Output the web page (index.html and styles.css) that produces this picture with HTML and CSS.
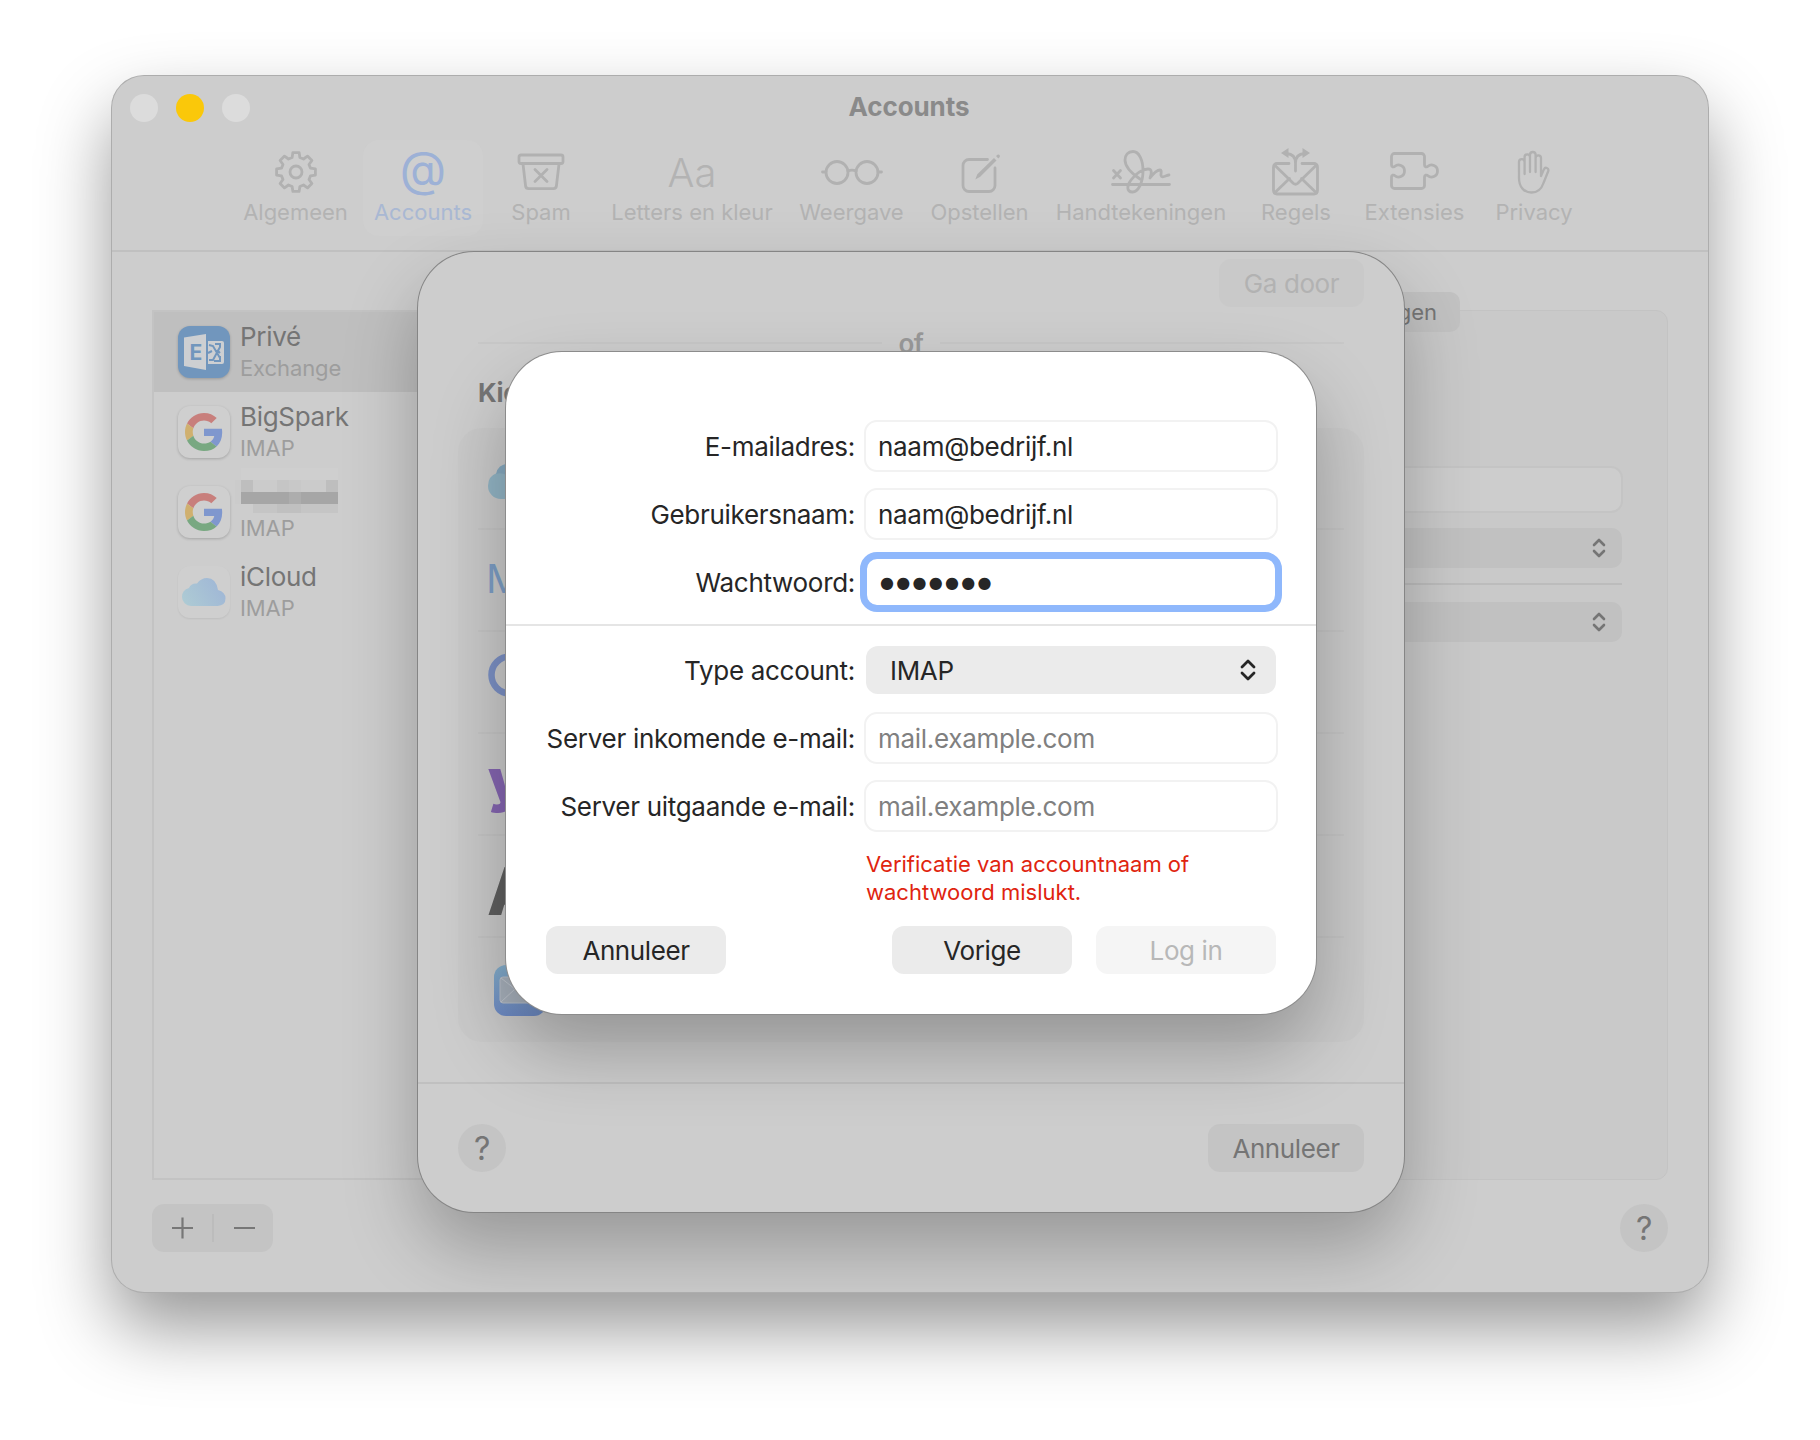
FILE: index.html
```html
<!DOCTYPE html>
<html lang="nl">
<head>
    <meta charset="UTF-8">
    <meta name="viewport" content="width=device-width, initial-scale=1.0">
    <title>Accounts</title>
    <link rel="stylesheet" href="styles.css">
</head>
<body>
    <div class="window">
        <div class="titlebar">
            <div class="lights">
                <span class="light"></span>
                <span class="light yellow"></span>
                <span class="light"></span>
            </div>
            <h1>Accounts</h1>
        </div>

        <!-- Toolbar -->
        <div class="toolbar">
            <div class="tool">
                <div class="tool-icon">
                    <svg width="44" height="44" viewBox="-22 -22 44 44">
                        <path d="M-3.9-14.5L-3.1-19.4H3.1L3.9-14.5L7.5-13L11.5-15.9L15.9-11.5L13-7.5L14.5-3.9L19.4-3.1V3.1L14.5 3.9L13 7.5L15.9 11.5L11.5 15.9L7.5 13L3.9 14.5L3.1 19.4H-3.1L-3.9 14.5L-7.5 13L-11.5 15.9L-15.9 11.5L-13 7.5L-14.5 3.9L-19.4 3.1V-3.1L-14.5-3.9L-13-7.5L-15.9-11.5L-11.5-15.9L-7.5-13Z"/>
                        <circle r="6"/>
                    </svg>
                </div>
                <span>Algemeen</span>
            </div>
            <div class="tool active">
                <div class="tool-icon at">@</div>
                <span>Accounts</span>
            </div>
            <div class="tool">
                <div class="tool-icon">
                    <svg width="48" height="44" viewBox="0 0 48 44">
                        <rect x="2" y="5" width="44" height="8.500" rx="2"/>
                        <path d="M6 14l2.600 22a3 3 0 0 0 3 2.600h24.800a3 3 0 0 0 3-2.600L42 14M18 19.500l12 12M30 19.500l-12 12"/>
                    </svg>
                </div>
                <span>Spam</span>
            </div>
            <div class="tool">
                <div class="tool-icon aa">Aa</div>
                <span>Letters en kleur</span>
            </div>
            <div class="tool">
                <div class="tool-icon">
                    <svg width="62" height="44" viewBox="0 0 62 44">
                        <circle cx="16" cy="22.500" r="11"/>
                        <circle cx="46" cy="22.500" r="11"/>
                        <path d="M1.500 22H5M57 22h3.500M27 21q4-1.800 8 0"/>
                    </svg>
                </div>
                <span>Weergave</span>
            </div>
            <div class="tool">
                <div class="tool-icon">
                    <svg width="44" height="44" viewBox="0 0 44 44">
                        <path d="M29.500 9.500H11a6 6 0 0 0-6 6v20a6 6 0 0 0 6 6h20a6 6 0 0 0 6-6V18"/>
                        <path class="fill" d="M17.300 29.500l2-5.200L36 8l2.500 2.500-16.300 16.300zM38 6l1.500-1.300q1.200-.6 2 .3t.2 2l-1.400 1.500z"/>
                    </svg>
                </div>
                <span>Opstellen</span>
            </div>
            <div class="tool">
                <div class="tool-icon">
                    <svg width="60" height="46" viewBox="0 0 60 46">
                        <path d="M2.500 21.500l7 7.500M9.500 21.500l-7 7.500M1.500 35.500h57"/>
                        <path d="M29 30C20 24 14 18 14 11C14 6 17 2.500 22 2.500C28 2.500 32 11 32 22C32 34 27 43 21.500 43C15 43 16 36 20 31C25 24 32 20 37 20C41 20 41 24 39 29C42 25 46 21 49 21C52 21 48 27.500 51.500 27.800C54 28 56 26 58 26"/>
                    </svg>
                </div>
                <span>Handtekeningen</span>
            </div>
            <div class="tool">
                <div class="tool-icon">
                    <svg width="48" height="48" viewBox="0 0 48 48">
                        <path d="M17 15.500H5a3.500 3.500 0 0 0-3.500 3.500v23.500a3.500 3.500 0 0 0 3.500 3.500h37a3.500 3.500 0 0 0 3.500-3.500V19a3.500 3.500 0 0 0-3.500-3.500H30"/>
                        <path d="M2.500 17l19 18.500q2 1.500 4 0L44.500 17M2.500 45l15-14.500M44.500 45l-15-14.500M23.500 23v-8q0-9-9-9.500M23.500 15q0-9 9-9.500"/>
                        <path class="fill" d="M9 5l7.500-5v10zM38 5l-7.500-5v10z"/>
                    </svg>
                </div>
                <span>Regels</span>
            </div>
            <div class="tool">
                <div class="tool-icon">
                    <svg width="50" height="40" viewBox="0 0 50 40">
                        <path d="M1.500 13V4.500a3 3 0 0 1 3-3H31.500a3 3 0 0 1 3 3V13c0 2 2 2.500 3.500 1.200c3-2.600 9.500-1 9.500 4.800s-6.500 7.400-9.500 4.800c-1.500-1.300-3.500-.8-3.500 1.200V33.500a3 3 0 0 1-3 3H4.500a3 3 0 0 1-3-3V25c0-2 2-2.500 3.500-1.200c3 2.600 9.500 1 9.500-4.800s-6.500-7.400-9.500-4.800c-1.500 1.300-3.500.8-3.500-1.200z"/>
                    </svg>
                </div>
                <span>Extensies</span>
            </div>
            <div class="tool">
                <div class="tool-icon">
                    <svg class="thin" width="36" height="44" viewBox="0 0 36 44">
                        <path d="M8.600 24V12a2.800 2.800 0 0 0-5.600 0V28c0 9 5 14.500 12.500 14.500 6 0 10-3.500 12-9.500l4.800-12c.8-3-3-4.600-4.400-1.600L25 26V8a2.700 2.700 0 0 0-5.400 0V22M19.600 22V4.800a2.800 2.800 0 0 0-5.600 0V22M14 22V7a2.700 2.700 0 0 0-5.400 0V22"/>
                    </svg>
                </div>
                <span>Privacy</span>
            </div>
        </div>

        <!-- Account list and settings -->
        <div class="content">
            <div class="sidebar">
                <div class="account selected">
                    <div class="app-icon exchange">
                        <svg width="52" height="52" viewBox="0 0 52 52">
                            <path fill="#cdcfd2" d="M6 11.500L28 8v36L6 40z"/>
                            <path fill="#cdcfd2" d="M30 15h14a2 2 0 0 1 2 2v19a2 2 0 0 1-2 2H30z"/>
                            <path fill="none" stroke="#7196bd" stroke-width="2" d="M31 19l4 1 7 12M31 34h4l7-13v-3h-5M42 30v5h-6M30 27l4-2M39 24l3 3"/>
                            <text x="11.500" y="33.500" font-size="21" font-weight="700" fill="#7196bd">E</text>
                        </svg>
                    </div>
                    <div>
                        <div class="name">Privé</div>
                        <div class="kind">Exchange</div>
                    </div>
                </div>
                <div class="account">
                    <div class="app-icon">
                        <svg width="38" height="38" viewBox="0 0 48 48">
                            <path fill="#c87f7c" d="M24 9.500c3.540 0 6.710 1.220 9.210 3.600l6.850-6.850C35.900 2.380 30.470 0 24 0 14.620 0 6.510 5.380 2.560 13.220l7.980 6.190C12.430 13.720 17.740 9.500 24 9.500z"/>
                            <path fill="#7f97ce" d="M46.980 24.550c0-1.570-.15-3.090-.38-4.550H24v9.020h12.940c-.58 2.960-2.260 5.480-4.780 7.180l7.730 6c4.510-4.180 7.090-10.360 7.090-17.650z"/>
                            <path fill="#d0b06f" d="M10.530 28.590c-.48-1.450-.76-2.990-.76-4.590s.27-3.140.76-4.590l-7.980-6.190C.92 16.460 0 20.120 0 24c0 3.880.92 7.540 2.560 10.780l7.970-6.190z"/>
                            <path fill="#78a881" d="M24 48c6.480 0 11.930-2.130 15.890-5.810l-7.730-6c-2.150 1.450-4.920 2.300-8.160 2.300-6.260 0-11.570-4.220-13.470-9.910l-7.980 6.190C6.510 42.620 14.620 48 24 48z"/>
                        </svg>
                    </div>
                    <div>
                        <div class="name">BigSpark</div>
                        <div class="kind">IMAP</div>
                    </div>
                </div>
                <div class="account">
                    <div class="app-icon">
                        <svg width="38" height="38" viewBox="0 0 48 48">
                            <path fill="#c87f7c" d="M24 9.500c3.540 0 6.710 1.220 9.210 3.600l6.850-6.850C35.900 2.380 30.470 0 24 0 14.620 0 6.510 5.380 2.560 13.220l7.980 6.190C12.430 13.720 17.740 9.500 24 9.500z"/>
                            <path fill="#7f97ce" d="M46.980 24.550c0-1.570-.15-3.090-.38-4.550H24v9.020h12.940c-.58 2.960-2.260 5.480-4.780 7.180l7.730 6c4.510-4.180 7.090-10.360 7.090-17.650z"/>
                            <path fill="#d0b06f" d="M10.530 28.590c-.48-1.450-.76-2.990-.76-4.590s.27-3.140.76-4.590l-7.980-6.190C.92 16.460 0 20.120 0 24c0 3.880.92 7.540 2.560 10.780l7.970-6.190z"/>
                            <path fill="#78a881" d="M24 48c6.480 0 11.930-2.130 15.890-5.810l-7.730-6c-2.150 1.450-4.920 2.300-8.160 2.300-6.260 0-11.570-4.220-13.470-9.910l-7.980 6.190C6.510 42.620 14.620 48 24 48z"/>
                        </svg>
                    </div>
                    <div>
                        <div class="name masked">
                            <svg width="103" height="45" viewBox="0 0 103 45" shape-rendering="crispEdges">
                                <rect x="6" y="0" width="97" height="12" fill="#cfcfcf"/>
                                <rect x="0" y="12" width="103" height="24" fill="#cbcbcb"/>
                                <rect x="6" y="12" width="12" height="12" fill="#bebebe"/>
                                <rect x="42" y="12" width="12" height="12" fill="#c5c5c5"/>
                                <rect x="54" y="12" width="12" height="12" fill="#c8c8c8"/>
                                <rect x="91" y="12" width="12" height="12" fill="#bebebe"/>
                                <rect x="6" y="24" width="97" height="12" fill="#a6a6a6"/>
                                <rect x="54" y="24" width="12" height="12" fill="#adadad"/>
                                <rect x="18" y="36" width="85" height="9" fill="#c5c5c5"/>
                                <rect x="42" y="36" width="24" height="9" fill="#c0c0c0"/>
                            </svg>
                        </div>
                        <div class="kind">IMAP</div>
                    </div>
                </div>
                <div class="account">
                    <div class="app-icon cloud">
                        <svg width="46" height="30" viewBox="0 0 46 30">
                            <defs>
                                <linearGradient id="cloud" x1="0" y1="0.7" x2="1" y2="0.3">
                                    <stop offset="0" stop-color="#adcad4"/>
                                    <stop offset="1" stop-color="#9fb6d6"/>
                                </linearGradient>
                            </defs>
                            <path fill="url(#cloud)" d="M10 29a9 9 0 0 1-9-9q0-7 7-9 2-5 8-4.500Q20 1 26 1q9 0 11 12 7.500 2 7.500 8.500 0 7-8 7.500z"/>
                        </svg>
                    </div>
                    <div>
                        <div class="name">iCloud</div>
                        <div class="kind">IMAP</div>
                    </div>
                </div>
            </div>

            <div class="settings">
                <div class="tab">gen</div>
                <div class="settings-field"></div>
                <div class="settings-popup"><svg class="chevrons" width="14" height="20" viewBox="0 0 14 20"><path d="M2 7l5-5 5 5M2 13l5 5 5-5"/></svg></div>
                <div class="settings-line"></div>
                <div class="settings-popup"><svg class="chevrons" width="14" height="20" viewBox="0 0 14 20"><path d="M2 7l5-5 5 5M2 13l5 5 5-5"/></svg></div>
            </div>
        </div>

        <div class="footer">
            <div class="add-remove">
                <svg width="121" height="48" viewBox="0 0 121 48">
                    <path stroke="#777" stroke-width="2.200" d="M20 24h21M30.500 13.500v21M82 24h21"/>
                    <path stroke="#bababa" stroke-width="1.500" d="M61 10v28"/>
                </svg>
            </div>
            <div class="help">?</div>
        </div>

        <!-- Sheet with mail providers -->
        <div class="sheet">
            <div class="sheet-body">
                <div class="continue">Ga door</div>
                <div class="or"><span>of</span></div>
                <h2>Kies</h2>
                <div class="providers">
                    <div class="provider icloud">
                        <svg width="70" height="40" viewBox="0 0 70 40"><path fill="#92b4c4" d="M13 37a13 13 0 0 1-13-13Q0 14 9 11 11 2 21 2h30v35z"/><path fill="#86a9bf" d="M8 12Q10 2 20 2v12q-6-4-12-2z"/></svg>
                    </div>
                    <div class="provider microsoft">M</div>
                    <div class="provider google"><svg width="44" height="44" viewBox="0 0 44 44"><circle cx="22" cy="22" r="18.500" fill="none" stroke="#7b90c4" stroke-width="6.500"/></svg></div>
                    <div class="provider yahoo">y</div>
                    <div class="provider aol">A</div>
                    <div class="provider mail">
                        <svg width="52" height="52" viewBox="0 0 52 52">
                            <defs>
                                <linearGradient id="mail" x1="0" y1="0" x2="0" y2="1">
                                    <stop offset="0" stop-color="#84aecb"/>
                                    <stop offset="1" stop-color="#6d8ac4"/>
                                </linearGradient>
                            </defs>
                            <rect width="52" height="51" rx="12" fill="url(#mail)"/>
                            <rect x="6" y="12" width="40" height="26" rx="3" fill="#a8b1bc" stroke="#b9c0ca"/>
                            <path fill="none" stroke="#c0c6cf" d="M7 37l14-13M7 13l19 15 19-15"/>
                        </svg>
                    </div>
                </div>
            </div>
            <div class="sheet-footer">
                <div class="help">?</div>
                <div class="cancel">Annuleer</div>
            </div>
        </div>

        <!-- Login form -->
        <form class="modal">
            <div class="form-top">
                <label>E-mailadres:</label>
                <div class="field">naam@bedrijf.nl</div>
                <label>Gebruikersnaam:</label>
                <div class="field">naam@bedrijf.nl</div>
                <label>Wachtwoord:</label>
                <div class="field focus"><span class="dots">●●●●●●●</span></div>
            </div>
            <div class="form-bottom">
                <label>Type account:</label>
                <div class="popup">IMAP<svg class="chevrons" width="16" height="22" viewBox="0 0 16 22"><path d="M2 8l6-6 6 6M2 14l6 6 6-6"/></svg></div>
                <label>Server inkomende e-mail:</label>
                <div class="field placeholder">mail.example.com</div>
                <label>Server uitgaande e-mail:</label>
                <div class="field placeholder">mail.example.com</div>
            </div>
            <p class="error">Verificatie van accountnaam of<br>wachtwoord mislukt.</p>
            <div class="buttons">
                <button type="button">Annuleer</button>
                <span class="spacer"></span>
                <button type="button">Vorige</button>
                <button type="button" disabled>Log in</button>
            </div>
        </form>
    </div>
</body>
</html>
```
FILE: styles.css
```css
* {
    box-sizing: border-box;
}

html {
    background: #fff;
}

body {
    margin: 0;
    height: 1440px;
    padding: 76px 112px;
    font-family: Inter, "Liberation Sans", sans-serif;
    font-size: 26px;
    letter-spacing: -0.4px;
    color: #262626;
}

.window {
    position: relative;
    width: 1596px;
    height: 1216px;
    border-radius: 32px;
    background: #cdcdcd;
    box-shadow: 0 0 0 1px #adadad, 0 36px 72px rgba(0, 0, 0, 0.41);
    overflow: hidden;
    display: flex;
    flex-direction: column;
}

.titlebar {
    height: 64px;
    display: flex;
    align-items: center;
    padding: 0 18px;
}

.lights {
    display: flex;
    gap: 18px;
    width: 200px;
}

.light {
    width: 28px;
    height: 28px;
    border-radius: 50%;
    background: #dcdcdc;
}

.yellow {
    background: #fac80a;
}

h1 {
    flex: 1;
    margin: 0 202px 3px 0;
    text-align: center;
    font-size: 26px;
    font-weight: 700;
    letter-spacing: -0.1px;
    color: #8a8a8a;
}

.toolbar {
    height: 112px;
    display: grid;
    grid-template-columns: 127px 120px 108px 186px 125px 123px 192px 110px 119px 112px;
    column-gap: 4px;
    padding: 0 0 14px 120px;
    border-bottom: 2px solid #c0c0c0;
}

.tool {
    display: flex;
    flex-direction: column;
    align-items: center;
    border-radius: 16px;
    font-size: 22px;
    letter-spacing: 0;
    line-height: 28px;
    color: #b3b3b3;
    white-space: nowrap;
}

.tool-icon {
    height: 58px;
    padding-top: 6px;
    display: flex;
    align-items: center;
    justify-content: center;
}

.tool svg {
    fill: none;
    stroke: #b1b1b1;
    stroke-width: 2.8;
    stroke-linecap: round;
    stroke-linejoin: round;
}

.tool svg.thin {
    stroke-width: 2.3;
}

.tool svg .fill {
    fill: #b1b1b1;
    stroke: none;
}

.active {
    background: #cfcfcf;
    color: #a9b8d3;
}

.at {
    padding-top: 0;
    font-size: 48px;
    font-weight: 400;
    color: #9db1d6;
}

.aa {
    padding-top: 7px;
    font-size: 40px;
    font-weight: 300;
}

.content {
    flex: 1;
    display: flex;
    justify-content: space-between;
    padding: 58px 40px 0;
}

.sidebar {
    width: 380px;
    height: 870px;
    border: 2px solid #c3c3c3;
}

.account {
    height: 80px;
    display: flex;
    align-items: center;
    gap: 10px;
    padding-left: 24px;
}

.selected {
    background: #bfbfbf;
}

.app-icon {
    width: 52px;
    height: 52px;
    border-radius: 12px;
    background: #cfcfcf;
    box-shadow: 0 1px 3px rgba(0, 0, 0, 0.2);
    display: flex;
    align-items: center;
    justify-content: center;
}

.exchange {
    background: #7196bd;
}

.cloud {
    box-shadow: 0 1px 2px rgba(0, 0, 0, 0.07);
}

.name {
    height: 32px;
    line-height: 32px;
    letter-spacing: -0.3px;
    color: #757575;
}

.kind {
    height: 30px;
    font-size: 22px;
    line-height: 30px;
    letter-spacing: -0.1px;
    color: #9d9d9d;
}

.masked {
    display: flex;
    align-items: flex-start;
}

.masked svg {
    flex: none;
    margin: -13px 0 0 -5px;
}

.settings {
    width: 1098px;
    height: 870px;
    padding: 0 45px;
    border: 1px solid #c3c3c3;
    border-radius: 12px;
    background: #c9c9c9;
    display: flex;
    flex-direction: column;
}

.tab {
    align-self: flex-end;
    width: 120px;
    height: 40px;
    margin: -19px 162px 134px 0;
    padding-right: 23px;
    border-radius: 10px;
    background: #c2c2c2;
    text-align: right;
    font-size: 22px;
    line-height: 40px;
    letter-spacing: 0;
    color: #767676;
}

.settings-field {
    height: 47px;
    margin-right: -1px;
    border: 2px solid #c4c4c4;
    border-radius: 12px;
    background: #cdcdcd;
}

.settings-popup {
    height: 40px;
    margin-top: 15px;
    padding-right: 16px;
    border-radius: 10px;
    background: #c1c1c1;
    display: flex;
    align-items: center;
    justify-content: flex-end;
}

.settings-line {
    height: 2px;
    margin: 15px 0 2px;
    background: #bcbcbc;
}

.chevrons {
    fill: none;
    stroke: #757575;
    stroke-width: 2.6;
    stroke-linecap: round;
    stroke-linejoin: round;
}

.footer {
    height: 88px;
    display: flex;
    justify-content: space-between;
    padding: 0 40px;
}

.add-remove {
    width: 121px;
    height: 48px;
    border-radius: 12px;
    background: #c4c4c4;
}

.help {
    width: 48px;
    height: 48px;
    border-radius: 50%;
    background: #c4c4c4;
    text-align: center;
    font-size: 32px;
    font-weight: 400;
    line-height: 50px;
    color: #757575;
}

/* the two sheets lie over the window, one above the other */
.sheet {
    position: absolute;
    left: 306px;
    top: 176px;
    width: 986px;
    height: 960px;
    border-radius: 56px;
    background: #cdcdcd;
    box-shadow: 0 0 0 1px #858585, 0 36px 72px rgba(0, 0, 0, 0.26);
    overflow: hidden;
    display: flex;
    flex-direction: column;
}

.sheet-body {
    height: 830px;
    padding: 7px 40px 0;
    display: flex;
    flex-direction: column;
}

.continue {
    align-self: flex-end;
    width: 145px;
    height: 48px;
    border-radius: 12px;
    background: #c9c9c9;
    text-align: center;
    line-height: 49px;
    color: #b2b2b2;
}

.or {
    display: flex;
    align-items: center;
    gap: 16px;
    height: 32px;
    margin: 20px 20px 0;
    font-weight: 600;
    color: #999;
}

.or::before,
.or::after {
    content: "";
    flex: 1;
    height: 2px;
    background: #c7c7c7;
}

h2 {
    margin: 17px 20px 0;
    font-size: 26px;
    line-height: 34px;
    font-weight: 700;
    color: #757575;
}

.providers {
    height: 614px;
    margin-top: 18px;
    padding: 0 20px;
    border-radius: 24px;
    background: #c9c9c9;
}

.provider {
    height: 102px;
    padding-left: 10px;
    border-bottom: 2px solid #c4c4c4;
    display: flex;
    align-items: center;
}

.provider:last-child {
    border: 0;
}

.icloud {
    padding-top: 8px;
}

.microsoft {
    padding: 0 0 2px 8px;
    font-size: 40px;
    font-weight: 400;
    line-height: 40px;
    color: #7c9dc4;
}

.google {
    padding-bottom: 14px;
}

.yahoo {
    padding-bottom: 8px;
    font-size: 58px;
    font-weight: 900;
    color: #8465b0;
}

.aol {
    padding: 10px 0 0 9px;
    font-size: 66px;
    font-weight: 800;
    color: #5f5f5f;
}

.mail {
    padding: 3px 0 0 16px;
}

.sheet-footer {
    flex: 1;
    display: flex;
    justify-content: space-between;
    padding: 40px;
    border-top: 2px solid #c0c0c0;
}

.cancel {
    width: 156px;
    height: 48px;
    border-radius: 12px;
    background: #c4c4c4;
    text-align: center;
    line-height: 49px;
    color: #757575;
}

.modal {
    position: absolute;
    left: 394px;
    top: 276px;
    width: 810px;
    height: 662px;
    border-radius: 56px;
    background: #fff;
    box-shadow: 0 0 0 1px #8c8c8c, 0 36px 72px rgba(0, 0, 0, 0.26);
    overflow: hidden;
}

.form-top,
.form-bottom {
    display: grid;
    grid-template-columns: 349px 414px;
    column-gap: 9px;
    align-items: center;
    letter-spacing: -0.3px;
}

.form-top {
    row-gap: 16px;
    padding: 68px 0 16px;
    border-bottom: 2px solid #e5e5e5;
}

.form-bottom {
    grid-template-rows: 52px 52px 52px;
    row-gap: 16px;
    padding-top: 18px;
}

label {
    text-align: right;
    white-space: nowrap;
}

.field {
    height: 52px;
    padding-left: 12px;
    border: 2px solid #f2f2f2;
    border-radius: 13px;
    line-height: 50px;
}

.focus {
    padding-left: 14px;
    border-color: #fff;
    line-height: 41px;
    outline: 7px solid #8fb8fc;
    outline-offset: -3px;
}

.dots {
    font-family: "DejaVu Sans", sans-serif;
    font-size: 16px;
    letter-spacing: 2.3px;
}

.placeholder {
    color: #808080;
}

.popup {
    height: 48px;
    margin: 0 2px;
    padding: 0 20px 0 24px;
    border-radius: 12px;
    background: #ebebeb;
    display: flex;
    align-items: center;
    justify-content: space-between;
}

.popup .chevrons {
    stroke: #262626;
    stroke-width: 2.8;
}

.error {
    margin: 18px 0 20px 360px;
    font-size: 22px;
    line-height: 28px;
    letter-spacing: 0;
    color: #e0240f;
}

.buttons {
    display: flex;
    gap: 24px;
    padding: 0 40px;
}

.spacer {
    flex: 1;
}

button {
    width: 180px;
    height: 48px;
    padding: 0;
    border: 0;
    border-radius: 12px;
    background: #ebebeb;
    font: inherit;
    letter-spacing: inherit;
    color: #262626;
}

button:disabled {
    background: #f5f5f5;
    color: #b8b8b8;
}
```
